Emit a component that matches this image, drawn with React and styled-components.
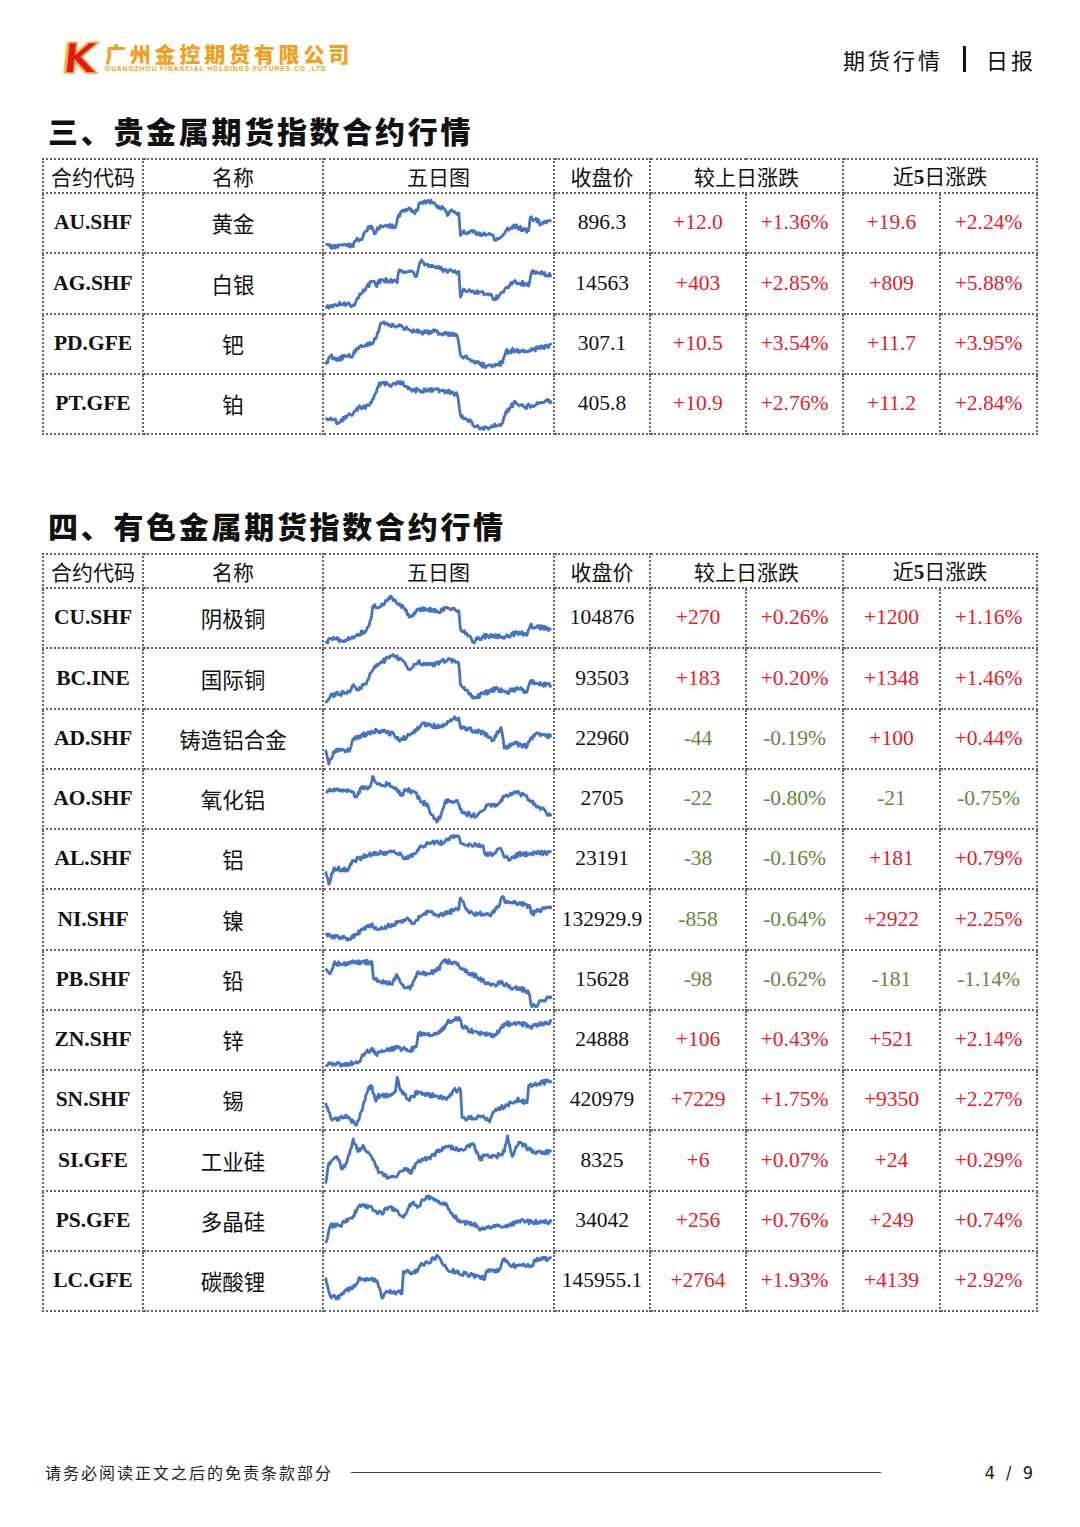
import React from "react";
import styled, { createGlobalStyle } from "styled-components";

const GlobalStyle = createGlobalStyle`
  html, body { margin: 0; padding: 0; background: #fff; }
  body { font-family: "Noto Sans CJK SC", "Noto Sans", sans-serif; color: #111; }
`;

const Page = styled.div`
  width: 1080px;
  height: 1527px;
  box-sizing: border-box;
  display: flex;
  flex-direction: column;
  padding: 0 44px 0 42px;
  overflow: hidden;
`;

const Header = styled.header`
  margin-top: 40px;
  height: 38px;
  display: flex;
  align-items: center;
  justify-content: space-between;
  padding-left: 18px;
`;

const Logo = styled.div`
  display: flex;
  align-items: center;
  gap: 5px;
`;

const LogoMark = styled.span`
  font-family: "DejaVu Sans", "Liberation Sans", sans-serif;
  font-weight: 900;
  font-size: 42px;
  line-height: 36px;
  color: #e3171c;
  -webkit-text-stroke: 1.6px #efb347;
  transform: skewX(-6deg) scaleX(1.05);
  display: inline-block;
  width: 40px;
  text-align: center;
  text-shadow: -2px 0 0 #f2c060;
`;

const LogoText = styled.div`
  display: flex;
  flex-direction: column;
  align-items: flex-start;
  color: #f0a020;
  margin-top: -3px;
`;

const LogoCn = styled.span`
  font-size: 21px;
  font-weight: 900;
  letter-spacing: 3.8px;
  line-height: 23px;
`;

const LogoEn = styled.span`
  font-family: "Liberation Sans", sans-serif;
  font-size: 6.6px;
  font-weight: 700;
  letter-spacing: 1px;
  line-height: 8px;
  white-space: nowrap;
`;

const HeadRight = styled.div`
  display: flex;
  align-items: center;
  font-size: 22px;
  letter-spacing: 3px;
  color: #111;
`;

const Bar = styled.span`
  display: inline-block;
  width: 3px;
  height: 26px;
  background: #111;
  margin: 0 20px 0 20px;
`;

const Title = styled.h2`
  margin: ${(p) => p.$top}px 0 0 6px;
  height: 40px;
  line-height: 40px;
  font-size: 30px;
  font-weight: 900;
  letter-spacing: 2.7px;
  color: #111;
`;

const Table = styled.table`
  margin-top: 8px;
  border-collapse: collapse;
  table-layout: fixed;
  width: 994px;
`;

const HeadCell = styled.th`
  height: 31px;
  padding: 0;
  border: 2px dotted #666;
  font-weight: 400;
  font-size: 21px;
  text-align: center;
  line-height: 30px;
  color: #111;
  b { font-family: "Liberation Serif", serif; font-weight: 700; }
`;

const Cell = styled.td`
  height: 58.25px;
  padding: 0;
  border: 2px dotted #666;
  text-align: center;
  font-size: 21.5px;
  line-height: 1;
  font-family: ${(p) =>
    p.$cn ? '"Noto Sans CJK SC", sans-serif' : '"Liberation Serif", "Times New Roman", serif'};
  font-weight: ${(p) => (p.$bold ? 700 : 400)};
  color: ${(p) => (p.$tone === "up" ? "#e4202a" : p.$tone === "down" ? "#5b8c3a" : "#111")};
`;

const ChartCell = styled.td`
  height: 58.25px;
  padding: 0;
  border: 2px dotted #666;
`;

const Spark = styled.svg`
  display: block;
  width: 100%;
  height: 58px;
`;

const Footer = styled.footer`
  margin-top: auto;
  margin-bottom: 44px;
  height: 22px;
  display: flex;
  align-items: center;
  color: #222;
`;

const FootText = styled.span`
  font-size: 16px;
  letter-spacing: 2px;
  padding-left: 3px;
`;

const FootLine = styled.span`
  width: 530px;
  height: 1px;
  background: #444;
  margin-left: 18px;
`;

const PageNo = styled.span`
  margin-left: auto;
  font-family: "DejaVu Sans Condensed", "Liberation Sans", sans-serif;
  font-size: 18px;
  letter-spacing: 3px;
`;

function rng(seed) {
  let s = seed >>> 0;
  return () => {
    s = (s * 1664525 + 1013904223) >>> 0;
    return s / 4294967296;
  };
}

function buildPath(pts, seed) {
  const r = rng(seed);
  const out = [];
  for (let i = 0; i < pts.length - 1; i++) {
    const [x0, y0] = pts[i];
    const [x1, y1] = pts[i + 1];
    const n = Math.max(2, Math.round((x1 - x0) / 3));
    for (let k = 0; k < n; k++) {
      const t = k / n;
      const x = x0 + (x1 - x0) * t;
      let y = y0 + (y1 - y0) * t;
      if (k > 0) y += (r() - 0.5) * 14;
      out.push([x, y]);
    }
  }
  out.push(pts[pts.length - 1]);
  return out
    .map(([x, y], i) => `${i ? "L" : "M"}${x.toFixed(1)} ${Math.min(176, Math.max(6, y)).toFixed(1)}`)
    .join(" ");
}

function Sparkline({ pts, seed }) {
  return (
    <Spark viewBox="0 0 705 182" preserveAspectRatio="none">
      <path
        d={buildPath(pts, seed)}
        fill="none"
        stroke="#4472c4"
        strokeWidth="2.8"
        strokeLinejoin="round"
        vectorEffect="non-scaling-stroke"
      />
    </Spark>
  );
}

const P = {
  AU: [[5,160],[30,168],[60,158],[90,165],[95,148],[120,135],[130,115],[145,100],[155,125],[165,105],[190,100],[220,105],[230,65],[260,45],[280,62],[295,30],[320,20],[345,35],[370,45],[380,68],[390,52],[415,60],[420,130],[430,115],[440,125],[460,120],[500,128],[520,128],[525,145],[540,140],[560,115],[590,100],[610,110],[630,115],[635,75],[650,80],[670,95],[700,85]],
  AG: [[5,170],[30,160],[60,155],[90,160],[100,145],[110,125],[130,105],[150,85],[160,100],[175,80],[200,85],[225,90],[230,55],[265,55],[285,70],[298,22],[310,35],[340,40],[370,50],[400,55],[415,55],[420,135],[430,110],[450,115],[480,120],[510,125],[525,140],[550,120],[570,100],[590,85],[620,95],[630,100],[640,55],[660,60],[700,65]],
  PD: [[5,155],[20,130],[45,140],[65,130],[90,125],[100,105],[115,95],[150,90],[165,55],[175,25],[200,30],[225,35],[260,45],[300,55],[340,52],[380,60],[410,65],[420,125],[450,140],[480,155],[500,160],[520,160],[550,150],[560,115],[590,110],[620,115],[660,105],[700,95]],
  PT: [[5,140],[20,135],[45,150],[65,130],[90,120],[100,105],[140,95],[155,65],[170,25],[210,30],[240,25],[265,45],[300,50],[340,45],[375,50],[410,60],[420,125],[440,140],[470,160],[480,170],[510,165],[550,150],[560,115],[590,85],[620,100],[660,90],[700,80]],
  CU: [[5,170],[20,155],[50,160],[90,155],[100,145],[130,130],[145,95],[150,55],[175,55],[205,22],[220,35],[245,60],[265,85],[290,65],[320,65],[350,70],[380,60],[415,68],[420,125],[440,140],[460,165],[490,150],[520,145],[560,150],[600,135],[625,145],[635,115],[660,120],[700,125]],
  BC: [[5,170],[20,145],[50,140],[80,135],[90,112],[100,128],[130,110],[145,75],[155,55],[180,40],[210,20],[240,35],[265,65],[290,40],[320,50],[350,45],[380,35],[415,45],[420,110],[440,130],[460,155],[490,140],[530,125],[560,135],[600,125],[625,135],[635,100],[660,110],[700,115]],
  AD: [[5,125],[15,170],[30,130],[80,125],[90,90],[115,80],[150,70],[165,65],[215,75],[230,95],[255,85],[280,70],[300,45],[330,50],[360,50],[390,30],[415,25],[420,55],[440,60],[470,65],[490,70],[520,95],[545,55],[555,120],[590,105],[625,115],[635,90],[660,75],[700,85]],
  AO: [[5,70],[20,65],[50,65],[80,65],[100,85],[115,55],[140,55],[150,20],[165,45],[195,45],[220,55],[240,80],[250,60],[280,70],[300,100],[320,110],[330,140],[350,160],[360,140],[375,95],[390,100],[410,95],[425,135],[450,140],[470,145],[485,130],[500,110],[530,110],[560,80],[595,70],[620,80],[640,100],[660,115],[700,145]],
  AL: [[5,130],[15,170],[30,120],[75,125],[90,95],[110,90],[130,80],[150,75],[200,70],[215,65],[240,80],[255,90],[275,75],[300,50],[330,40],[370,40],[395,20],[415,20],[420,40],[450,45],[490,50],[495,75],[520,75],[545,60],[555,85],[575,90],[600,75],[640,75],[700,70]],
  NI: [[5,135],[20,145],[50,150],[80,155],[100,140],[130,115],[145,110],[165,125],[195,115],[230,100],[260,90],[270,105],[295,85],[320,65],[350,80],[370,75],[400,65],[415,60],[420,25],[440,60],[460,75],[490,75],[510,80],[535,55],[550,20],[560,40],[600,40],[635,55],[640,75],[660,65],[700,50]],
  PB: [[5,55],[20,70],[30,40],[60,40],[100,35],[148,35],[152,85],[170,95],[210,105],[225,75],[240,105],[265,120],[290,65],[320,70],[350,60],[370,30],[390,35],[415,45],[425,55],[450,70],[470,80],[500,100],[520,105],[550,100],[580,120],[600,115],[630,130],[640,175],[660,165],[700,140]],
  ZN: [[5,170],[30,165],[60,168],[90,165],[105,160],[130,130],[145,120],[160,135],[190,125],[225,115],[240,120],[255,120],[265,125],[285,110],[290,70],[310,75],[340,70],[360,65],[380,35],[400,30],[415,20],[425,50],[460,65],[490,70],[515,80],[540,65],[555,40],[575,40],[600,35],[630,50],[650,45],[700,35]],
  SN: [[5,100],[20,145],[40,155],[70,140],[100,170],[120,110],[135,60],[145,45],[160,95],[165,80],[200,75],[220,65],[225,20],[235,60],[260,90],[270,80],[290,65],[320,75],[350,80],[380,85],[400,60],[420,60],[425,145],[450,150],[490,140],[510,160],[520,130],[545,115],[580,100],[600,90],[625,100],[630,45],[660,40],[700,30]],
  SI: [[5,165],[15,100],[40,80],[55,120],[70,100],[90,25],[105,65],[120,45],[150,90],[170,130],[200,145],[220,145],[250,120],[270,130],[285,100],[300,90],[330,80],[350,65],[380,50],[410,55],[430,60],[460,40],[480,90],[500,75],[530,80],[555,65],[565,15],[580,80],[600,35],[630,55],[650,70],[700,65]],
  PS: [[5,160],[20,105],[50,105],[75,85],[90,75],[110,40],[140,45],[160,60],[180,70],[190,50],[220,55],[245,80],[270,35],[290,45],[315,15],[350,30],[380,45],[400,75],[420,95],[460,100],[480,120],[520,110],[560,105],[600,90],[640,95],[670,95],[700,95]],
  LC: [[5,80],[20,140],[40,145],[60,130],[70,120],[90,110],[110,80],[120,85],[150,85],[165,95],[180,145],[195,125],[230,125],[240,130],[245,60],[270,65],[290,55],[300,35],[320,35],[345,15],[360,25],[380,55],[410,65],[440,70],[470,75],[495,85],[500,60],[540,55],[555,20],[575,45],[600,40],[640,45],[650,25],[700,20]],
};

const precious = [
  ["AU.SHF", "黄金", "AU", "896.3", "+12.0", "+1.36%", "+19.6", "+2.24%"],
  ["AG.SHF", "白银", "AG", "14563", "+403", "+2.85%", "+809", "+5.88%"],
  ["PD.GFE", "钯", "PD", "307.1", "+10.5", "+3.54%", "+11.7", "+3.95%"],
  ["PT.GFE", "铂", "PT", "405.8", "+10.9", "+2.76%", "+11.2", "+2.84%"],
];

const base = [
  ["CU.SHF", "阴极铜", "CU", "104876", "+270", "+0.26%", "+1200", "+1.16%"],
  ["BC.INE", "国际铜", "BC", "93503", "+183", "+0.20%", "+1348", "+1.46%"],
  ["AD.SHF", "铸造铝合金", "AD", "22960", "-44", "-0.19%", "+100", "+0.44%"],
  ["AO.SHF", "氧化铝", "AO", "2705", "-22", "-0.80%", "-21", "-0.75%"],
  ["AL.SHF", "铝", "AL", "23191", "-38", "-0.16%", "+181", "+0.79%"],
  ["NI.SHF", "镍", "NI", "132929.9", "-858", "-0.64%", "+2922", "+2.25%"],
  ["PB.SHF", "铅", "PB", "15628", "-98", "-0.62%", "-181", "-1.14%"],
  ["ZN.SHF", "锌", "ZN", "24888", "+106", "+0.43%", "+521", "+2.14%"],
  ["SN.SHF", "锡", "SN", "420979", "+7229", "+1.75%", "+9350", "+2.27%"],
  ["SI.GFE", "工业硅", "SI", "8325", "+6", "+0.07%", "+24", "+0.29%"],
  ["PS.GFE", "多晶硅", "PS", "34042", "+256", "+0.76%", "+249", "+0.74%"],
  ["LC.GFE", "碳酸锂", "LC", "145955.1", "+2764", "+1.93%", "+4139", "+2.92%"],
];

const tone = (v) => (v.startsWith("-") ? "down" : "up");

function QuoteTable({ rows, seedBase }) {
  return (
    <Table>
      <colgroup>
        <col style={{ width: 100 }} />
        <col style={{ width: 180 }} />
        <col style={{ width: 231 }} />
        <col style={{ width: 96 }} />
        <col style={{ width: 96 }} />
        <col style={{ width: 97 }} />
        <col style={{ width: 97 }} />
        <col style={{ width: 97 }} />
      </colgroup>
      <thead>
        <tr>
          <HeadCell>合约代码</HeadCell>
          <HeadCell>名称</HeadCell>
          <HeadCell>五日图</HeadCell>
          <HeadCell>收盘价</HeadCell>
          <HeadCell colSpan={2}>较上日涨跌</HeadCell>
          <HeadCell colSpan={2}>
            近<b>5</b>日涨跌
          </HeadCell>
        </tr>
      </thead>
      <tbody>
        {rows.map((r, i) => (
          <tr key={r[0]}>
            <Cell $bold>{r[0]}</Cell>
            <Cell $cn>{r[1]}</Cell>
            <ChartCell>
              <Sparkline pts={P[r[2]]} seed={seedBase + i * 97} />
            </ChartCell>
            <Cell>{r[3]}</Cell>
            <Cell $tone={tone(r[4])}>{r[4]}</Cell>
            <Cell $tone={tone(r[5])}>{r[5]}</Cell>
            <Cell $tone={tone(r[6])}>{r[6]}</Cell>
            <Cell $tone={tone(r[7])}>{r[7]}</Cell>
          </tr>
        ))}
      </tbody>
    </Table>
  );
}

export default function App() {
  return (
    <>
      <GlobalStyle />
      <Page>
        <Header>
          <Logo>
            <LogoMark>K</LogoMark>
            <LogoText>
              <LogoCn>广州金控期货有限公司</LogoCn>
              <LogoEn>GUANGZHOU FINANCIAL HOLDINGS FUTURES CO.,LTD</LogoEn>
            </LogoText>
          </Logo>
          <HeadRight>
            期货行情
            <Bar />
            日报
          </HeadRight>
        </Header>
        <Title $top={32}>三、贵金属期货指数合约行情</Title>
        <QuoteTable rows={precious} seedBase={11} />
        <Title $top={70}>四、有色金属期货指数合约行情</Title>
        <QuoteTable rows={base} seedBase={503} />
        <Footer>
          <FootText>请务必阅读正文之后的免责条款部分</FootText>
          <FootLine />
          <PageNo>4 / 9</PageNo>
        </Footer>
      </Page>
    </>
  );
}
